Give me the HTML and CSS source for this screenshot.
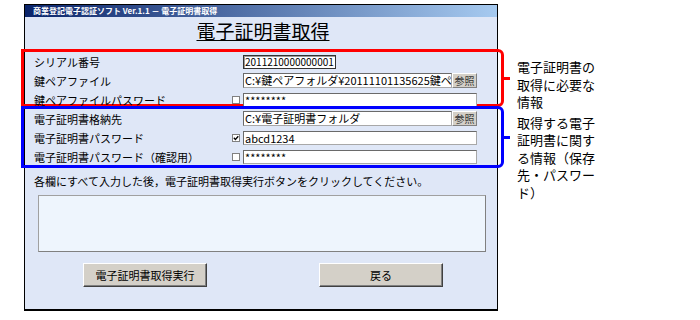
FILE: index.html
```html
<!DOCTYPE html>
<html lang="ja">
<head>
  <meta charset="UTF-8" />
  <meta name="viewport" content="width=device-width, initial-scale=1.0" />
  <title>電子証明書取得</title>
  <link rel="stylesheet" href="styles.css">
</head>
<body>
  <div class="page">
    <div class="window">
      <div class="titlebar">商業登記電子認証ソフト Ver.1.1 － 電子証明書取得</div>
      <div class="panel">
        <h1 class="heading">電子証明書取得</h1>

        <div class="group group-red">
          <div class="row">
            <span class="label">シリアル番号</span>
            <span class="check-cell"></span>
            <span class="field field-serial">2011210000000001</span>
          </div>
          <div class="row">
            <span class="label">鍵ペアファイル</span>
            <span class="check-cell"></span>
            <span class="field field-path">C:¥鍵ペアフォルダ¥20111101135625鍵ペア</span>
            <button class="ref-btn">参照</button>
          </div>
          <div class="row">
            <span class="label">鍵ペアファイルパスワード</span>
            <span class="check-cell"><span class="checkbox"></span></span>
            <span class="field field-wide">********</span>
          </div>
        </div>

        <div class="group group-blue">
          <div class="row">
            <span class="label">電子証明書格納先</span>
            <span class="check-cell"></span>
            <span class="field field-path">C:¥電子証明書フォルダ</span>
            <button class="ref-btn">参照</button>
          </div>
          <div class="row">
            <span class="label">電子証明書パスワード</span>
            <span class="check-cell">
              <span class="checkbox">
                <svg width="6" height="6" viewBox="0 0 6 6"><path d="M0.8 2.8 L2.4 4.5 L5.3 1.2" fill="none" stroke="#000" stroke-width="1.3"/></svg>
              </span>
            </span>
            <span class="field field-wide">abcd1234</span>
          </div>
          <div class="row">
            <span class="label">電子証明書パスワード（確認用）</span>
            <span class="check-cell"><span class="checkbox"></span></span>
            <span class="field field-wide">********</span>
          </div>
        </div>

        <p class="message">各欄にすべて入力した後，電子証明書取得実行ボタンをクリックしてください。</p>
        <div class="output"></div>

        <div class="actions">
          <button class="btn">電子証明書取得実行</button>
          <button class="btn">戻る</button>
        </div>
      </div>
    </div>

    <div class="notes">
      <p class="note">電子証明書の取得に必要な情報</p>
      <p class="note note-blue">取得する電子証明書に関する情報（保存先・パスワード）</p>
    </div>
  </div>
</body>
</html>
```

FILE: styles.css
```css
body {
  margin: 0;
  background: #fff;
  font-family: "Noto Sans CJK JP", "Noto Sans", sans-serif;
  color: #000;
}
.page {
  display: flex;
  align-items: flex-start;
  padding: 4px 0 0 24px;
}
.window {
  width: 474px;
  box-sizing: border-box;
  border: 1px solid #000;
  border-bottom-width: 2px;
  background: #dfe7f7;
}
.titlebar {
  height: 12px;
  padding-left: 8px;
  background: linear-gradient(to right, #0a246a, #a6caf0);
  color: #fff;
  font-size: 8px;
  font-weight: bold;
  line-height: 12px;
  white-space: nowrap;
}
.heading {
  margin: 0 0 5px;
  padding: 1px 0 0 4px;
  font-size: 19px;
  font-weight: normal;
  line-height: 26px;
  text-align: center;
  text-decoration: underline;
}
.group {
  position: relative;
  height: 58px;
  box-sizing: border-box;
  margin: 0 -7px 0 -4px;
  border: 3px solid currentColor;
  border-radius: 0 6px 6px 0;
}
.group::after {
  content: "";
  position: absolute;
  top: 50%;
  right: -9px;
  width: 6px;
  height: 3px;
  margin-top: -1.5px;
  background: currentColor;
}
.group-red {
  color: #f00;
}
.group-blue {
  color: #00f;
  height: 62px;
  margin-top: -1px;
}
.row {
  display: flex;
  align-items: center;
  height: 19px;
  padding-left: 10px;
  color: #000;
  font-size: 11px;
}
.label {
  width: 198px;
}
.check-cell {
  width: 11px;
}
.checkbox {
  display: block;
  width: 6px;
  height: 6px;
  border: 1px solid #808080;
  background: #fff;
}
.checkbox svg {
  display: block;
}
.field {
  box-sizing: border-box;
  height: 14px;
  padding: 0 1px;
  background: #fff;
  border: 1px solid #7f7f7f;
  border-color: #6a6a6a #a8a8a8 #a8a8a8 #6a6a6a;
  font-size: 11px;
  line-height: 12px;
  overflow: hidden;
  white-space: nowrap;
}
.field-serial {
  width: 93px;
  border: 1px solid #333;
  box-shadow: inset 1px 1px 0 #999;
  font-size: 10px;
}
.field-path {
  width: 209px;
  height: 15px;
  line-height: 13px;
}
.field-wide {
  width: 234px;
}
.ref-btn {
  width: 25px;
  height: 15px;
  box-sizing: border-box;
  padding: 0;
  background: #d4d0c8;
  border: 1px solid;
  border-color: #fff #808080 #808080 #fff;
  font: 10px/12px "Noto Sans CJK JP", sans-serif;
  color: #333;
}
.message {
  margin: 4px 0 0;
  padding-left: 9px;
  font-size: 11px;
  line-height: 18px;
}
.output {
  height: 57px;
  box-sizing: border-box;
  margin: 5px 11px 0 13px;
  background: #eef5fd;
  border: 1px solid;
  border-color: #a0a0a0 #808080 #808080 #a0a0a0;
}
.actions {
  display: flex;
  gap: 112px;
  margin-top: 11px;
  padding: 0 0 22px 58px;
}
.btn {
  width: 124px;
  height: 24px;
  padding: 0;
  background: #d4d0c8;
  border: 1px solid;
  border-color: #fff #404040 #404040 #fff;
  box-shadow: inset -1px -1px 0 #808080;
  font: 11px "Noto Sans CJK JP", sans-serif;
  color: #000;
}
.notes {
  width: 80px;
  margin: 54px 0 0 19px;
  font-size: 13px;
  line-height: 17.5px;
}
.note {
  margin: 0;
}
.note-blue {
  margin-top: 3px;
}
```
